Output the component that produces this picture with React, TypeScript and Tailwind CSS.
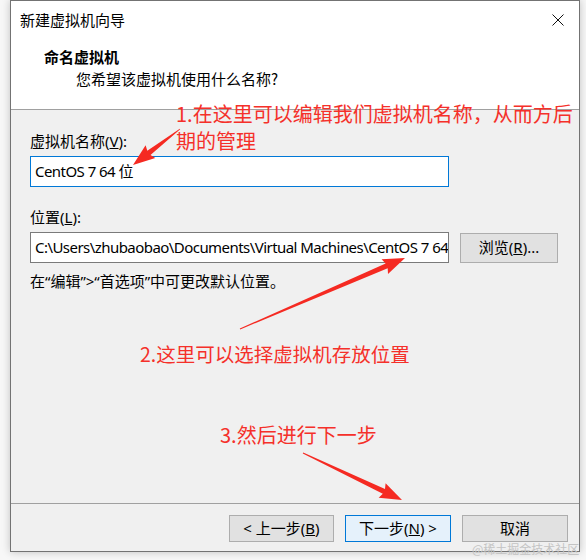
import React from "react";

const ui = { fontFamily: '"Noto Sans", "Noto Sans CJK SC", sans-serif' };
const cjk = { fontFamily: '"Noto Sans CJK SC", sans-serif' };

type Pt = [number, number];

function Arrow({ from, to }: { from: Pt; to: Pt }) {
  const dx = to[0] - from[0];
  const dy = to[1] - from[1];
  const len = Math.hypot(dx, dy);
  const ux = dx / len;
  const uy = dy / len;
  const nx = -uy;
  const ny = ux;
  const head = 20;
  const bx = to[0] - ux * head;
  const by = to[1] - uy * head;
  const p = (x: number, y: number) => `${x.toFixed(1)},${y.toFixed(1)}`;
  const pts = [
    p(from[0] + nx * 0.4, from[1] + ny * 0.4),
    p(bx + nx * 2.6, by + ny * 2.6),
    p(bx - ux * 2 + nx * 8, by - uy * 2 + ny * 8),
    p(to[0], to[1]),
    p(bx - ux * 2 - nx * 8, by - uy * 2 - ny * 8),
    p(bx - nx * 2.6, by - ny * 2.6),
    p(from[0] - nx * 0.4, from[1] - ny * 0.4),
  ].join(" ");
  return <polygon points={pts} fill="#f52a22" />;
}

function Btn({
  children,
  primary,
  className = "",
}: {
  children: React.ReactNode;
  primary?: boolean;
  className?: string;
}) {
  return (
    <div
      className={`flex items-center justify-center border text-[15px] text-black ${
        primary ? "border-[#0078d7] bg-[#e5f1fb]" : "border-[#adadad] bg-[#e1e1e1]"
      } ${className}`}
      style={ui}
    >
      {children}
    </div>
  );
}

export default function App() {
  return (
    <div className="relative h-[560px] w-[586px] overflow-hidden bg-[#f7f7f7]" style={ui}>
      {/* dialog window */}
      <div className="ml-[10px] flex h-[552px] w-[570px] flex-col border border-[#737373] bg-white shadow-[0_0_8px_rgba(0,0,0,0.22)]">
        {/* title bar */}
        <div className="flex h-[38px] items-center justify-between pl-[9px] pr-[15px]">
          <span className="text-[15px] text-black" style={cjk}>
            新建虚拟机向导
          </span>
          <svg width="12" height="12" viewBox="0 0 12 12">
            <path d="M0.5 0.5 L11.5 11.5 M11.5 0.5 L0.5 11.5" stroke="#111" strokeWidth="1" />
          </svg>
        </div>

        {/* header */}
        <div className="flex h-[71px] flex-col border-b border-[#a0a0a0] pl-[33px] pt-[7px]">
          <span className="text-[15px] font-bold leading-[22px] text-black" style={cjk}>
            命名虚拟机
          </span>
          <span className="pl-[32px] text-[15px] leading-[22px] text-black" style={cjk}>
            您希望该虚拟机使用什么名称?
          </span>
        </div>

        {/* body */}
        <div className="flex flex-1 flex-col bg-[#f0f0f0] pl-[19px] pt-[21px] text-[15px] text-black">
          <span className="leading-[20px]">
            虚拟机名称(<u>V</u>):
          </span>
          <div className="mt-[5px] flex h-[31px] w-[419px] items-center border border-[#0078d7] bg-white pl-[4px] tracking-[-0.55px]">
            CentOS 7 64 位
          </div>
          <span className="mt-[20px] leading-[20px]">
            位置(<u>L</u>):
          </span>
          <div className="mt-[5px] flex items-center">
            <div className="flex h-[31px] w-[419px] items-center overflow-hidden whitespace-nowrap border border-[#7a7a7a] bg-white pl-[4px] tracking-[-0.55px]">
              C:\Users\zhubaobao\Documents\Virtual Machines\CentOS 7 64
            </div>
            <Btn className="ml-[11px] h-[30px] w-[98px]">
              浏览(<u>R</u>)...
            </Btn>
          </div>
          <span className="mt-[8px] leading-[20px]">在“编辑”&gt;“首选项”中可更改默认位置。</span>
        </div>

        {/* footer */}
        <div className="flex h-[48px] items-start justify-end gap-[11px] border-t border-[#a0a0a0] bg-[#f0f0f0] pr-[11px] pt-[11px]">
          <Btn className="h-[27px] w-[105px]">
            &lt; 上一步(<u>B</u>)
          </Btn>
          <Btn primary className="h-[27px] w-[106px]">
            下一步(<u>N</u>) &gt;
          </Btn>
          <Btn className="h-[27px] w-[106px]">取消</Btn>
        </div>
      </div>

      {/* annotations */}
      <svg className="pointer-events-none absolute left-0 top-0" width="586" height="560">
        <Arrow from={[180, 129]} to={[133, 165]} />
        <Arrow from={[240, 329]} to={[405, 258]} />
        <Arrow from={[303, 453]} to={[402, 500]} />
      </svg>
      <div
        className="absolute left-[176px] top-[100px] whitespace-nowrap text-[20px] leading-[27px] text-[#f5302a]"
        style={cjk}
      >
        1.在这里可以编辑我们虚拟机名称，从而方后
        <br />
        期的管理
      </div>
      <div
        className="absolute left-[140px] top-[340px] whitespace-nowrap text-[19.5px] leading-[27px] text-[#f5302a]"
        style={cjk}
      >
        2.这里可以选择虚拟机存放位置
      </div>
      <div
        className="absolute left-[220px] top-[421px] whitespace-nowrap text-[20px] leading-[27px] text-[#f5302a]"
        style={cjk}
      >
        3.然后进行下一步
      </div>
      <div
        className="absolute left-[472px] top-[540px] whitespace-nowrap text-[12px] leading-[18px] text-[#c4c4c4]"
        style={cjk}
      >
        @稀土掘金技术社区
      </div>
    </div>
  );
}
